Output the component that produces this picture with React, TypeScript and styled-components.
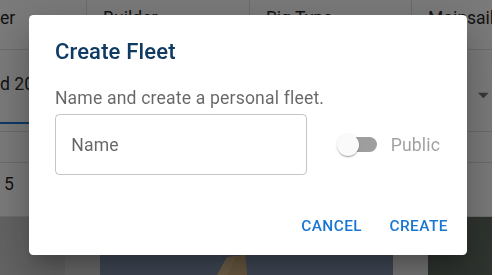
import React from "react";
import styled, { createGlobalStyle } from "styled-components";

const Global = createGlobalStyle`
  html, body { margin: 0; padding: 0; background: #ffffff; }
  body { font-family: Roboto, "Liberation Sans", sans-serif; overflow: hidden; }
  * { box-sizing: border-box; }
`;

const Page = styled.div`
  width: 495px;
  height: 275px;
  display: flex;
  flex-direction: column;
  background: #ffffff;
  color: rgba(0, 0, 0, 0.87);
  font-size: 17.6px;
  line-height: 26.4px;
`;

const Row = styled.div<{ $h: number }>`
  display: grid;
  grid-template-columns: 87px 163px 162px 1fr 3px;
  height: ${(p) => p.$h}px;
  border-bottom: 1px solid #e0e0e0;
  flex-shrink: 0;
`;

const Cell = styled.div<{ $pad?: string; $divider?: boolean }>`
  padding: ${(p) => p.$pad ?? "5px 0 0 16px"};
  border-right: ${(p) => (p.$divider ? "1px solid #e0e0e0" : "none")};
  white-space: nowrap;
  overflow: hidden;
`;

const SelectCell = styled.div`
  display: flex;
  align-items: flex-end;
  border-bottom: 2px solid #1976d2;
  margin-bottom: 7px;
  white-space: nowrap;
  overflow: hidden;
  padding-bottom: 25px;
`;

const ArrowCell = styled.div`
  display: flex;
  justify-content: flex-end;
  align-items: flex-start;
  padding-top: 32px;
  color: rgba(0, 0, 0, 0.54);
`;

const Gallery = styled.div`
  flex: 1;
  display: grid;
  grid-template-columns: 65px 35px 293px 35px 64px 3px;
`;

const Tile = styled.div<{ $bg: string }>`
  background: ${(p) => p.$bg};
  overflow: hidden;
`;

const SailArt = styled.svg`
  display: block;
  width: 100%;
  height: 100%;
`;

const Overlay = styled.div`
  position: fixed;
  inset: 0;
  background: rgba(0, 0, 0, 0.52);
  display: flex;
  justify-content: center;
  align-items: flex-start;
  padding-top: 15px;
`;

const Strip = styled.div`
  position: fixed;
  top: 0;
  right: 0;
  bottom: 0;
  width: 3px;
  background: #ffffff;
`;

const Dialog = styled.div`
  width: 438px;
  background: #ffffff;
  border-radius: 4.4px;
  box-shadow: 0px 11px 15px -7px rgba(0, 0, 0, 0.2),
    0px 24px 38px 3px rgba(0, 0, 0, 0.14), 0px 9px 46px 8px rgba(0, 0, 0, 0.12);
  display: flex;
  flex-direction: column;
`;

const Title = styled.h2`
  margin: 0;
  padding: 18.6px 26.4px 16.6px;
  font-family: Roboto, "Liberation Sans", sans-serif;
  font-weight: 500;
  font-size: 22px;
  line-height: 35.2px;
  letter-spacing: 0.0075em;
  color: #0e3a63;
`;

const Content = styled.div`
  padding: 0 26.4px 22px;
`;

const Subtitle = styled.p`
  margin: 0 0 2px;
  font-size: 17.6px;
  line-height: 26.4px;
  letter-spacing: 0.00938em;
  color: rgba(0, 0, 0, 0.6);
`;

const FieldRow = styled.div`
  display: flex;
  align-items: center;
`;

const TextField = styled.div`
  width: 252px;
  height: 61.6px;
  border: 1px solid rgba(0, 0, 0, 0.23);
  border-radius: 4.4px;
  display: flex;
  align-items: center;
  padding-left: 15.4px;
  font-size: 17.6px;
  letter-spacing: 0.00938em;
  color: rgba(0, 0, 0, 0.6);
`;

const SwitchLabel = styled.label`
  display: flex;
  align-items: center;
  margin-left: 20px;
  font-size: 17.6px;
  letter-spacing: 0.00938em;
  color: rgba(0, 0, 0, 0.38);
`;

const SwitchRoot = styled.span`
  position: relative;
  width: 63.8px;
  height: 41.8px;
  padding: 13.2px;
  display: inline-flex;
  flex-shrink: 0;
`;

const Track = styled.span`
  width: 100%;
  height: 100%;
  border-radius: 7.7px;
  background: #000000;
  opacity: 0.38;
`;

const Thumb = styled.span`
  position: absolute;
  left: 9.9px;
  top: 9.9px;
  width: 22px;
  height: 22px;
  border-radius: 50%;
  background: #fafafa;
  box-shadow: 0px 2px 1px -1px rgba(0, 0, 0, 0.2),
    0px 1px 1px 0px rgba(0, 0, 0, 0.14), 0px 1px 3px 0px rgba(0, 0, 0, 0.12);
`;

const Actions = styled.div`
  display: flex;
  justify-content: flex-end;
  align-items: center;
  gap: 9.8px;
  padding: 8.8px 9.8px 8.8px 8.8px;
`;

const TextButton = styled.button`
  background: none;
  border: none;
  min-width: 70.4px;
  padding: 6.6px 8.8px;
  font-family: Roboto, "Liberation Sans", sans-serif;
  font-weight: 500;
  font-size: 15.4px;
  line-height: 1.75;
  letter-spacing: 0.02857em;
  text-transform: uppercase;
  color: #1976d2;
  border-radius: 4.4px;
  cursor: pointer;
`;

export default function App() {
  return (
    <>
      <Global />
      <Page>
        <Row $h={50}>
          <Cell $pad="5px 0 0 0" $divider>er</Cell>
          <Cell $divider>Builder</Cell>
          <Cell $divider>Rig Type</Cell>
          <Cell>Mainsail</Cell>
          <div />
        </Row>
        <Row $h={82}>
          <SelectCell>d 2020</SelectCell>
          <Cell />
          <Cell />
          <ArrowCell>
            <svg width="26" height="26" viewBox="-4 0 24 24" fill="currentColor">
              <path d="M7 10l5 5 5-5z" />
            </svg>
          </ArrowCell>
          <div />
        </Row>
        <Row $h={31}>
          <Cell />
          <Cell />
          <Cell />
          <Cell />
          <div />
        </Row>
        <Row $h={54}>
          <Cell $pad="8px 0 0 4px">5</Cell>
          <Cell />
          <Cell />
          <Cell />
          <div />
        </Row>
        <Gallery>
          <Tile $bg="#cecece" />
          <Tile $bg="#dcdcdc" />
          <Tile $bg="#8596b1">
            <SailArt viewBox="0 0 293 58" preserveAspectRatio="none">
              <polygon points="127,40 145,38 147,58 117,58" fill="#e5c696" />
              <polygon points="135,40 145,38 147,58 128,58" fill="#d9b884" />
            </SailArt>
          </Tile>
          <Tile $bg="#f5f5f5" />
          <Tile $bg="#626c62" />
          <Tile $bg="#ffffff" />
        </Gallery>
      </Page>
      <Overlay>
        <Dialog role="dialog">
          <Title>Create Fleet</Title>
          <Content>
            <Subtitle>Name and create a personal fleet.</Subtitle>
            <FieldRow>
              <TextField>Name</TextField>
              <SwitchLabel>
                <SwitchRoot>
                  <Track />
                  <Thumb />
                </SwitchRoot>
                Public
              </SwitchLabel>
            </FieldRow>
          </Content>
          <Actions>
            <TextButton>Cancel</TextButton>
            <TextButton>Create</TextButton>
          </Actions>
        </Dialog>
      </Overlay>
      <Strip />
    </>
  );
}
